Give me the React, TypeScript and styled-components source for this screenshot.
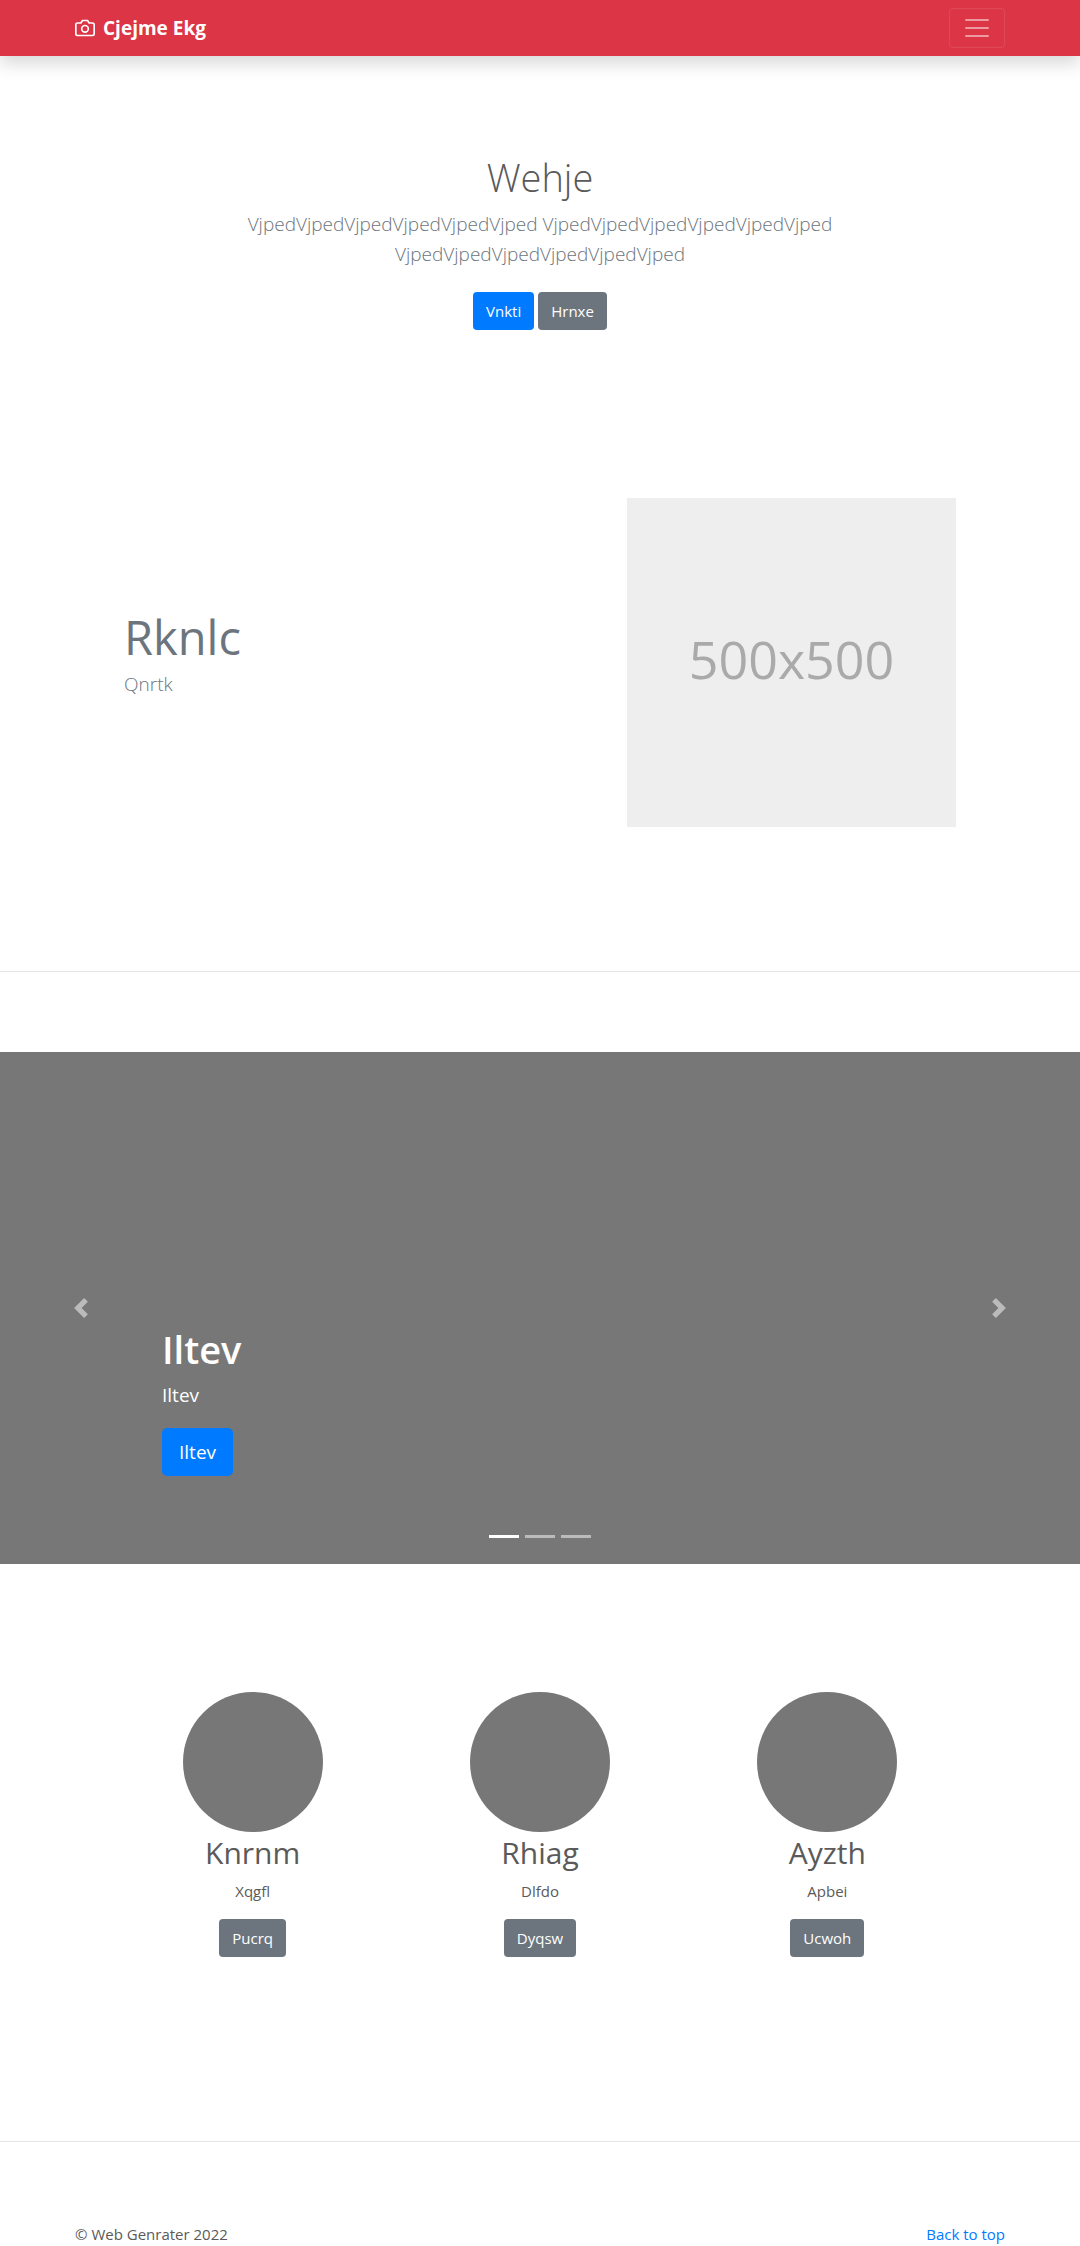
import React, { useState } from "react";
import styled, { createGlobalStyle } from "styled-components";

const GlobalStyle = createGlobalStyle`
  *, *::before, *::after { box-sizing: border-box; }
  body {
    margin: 0;
    background: #fff;
    color: #5a5a5a;
    font-family: "Segoe UI", "Open Sans", "Noto Sans", sans-serif;
    font-size: 15px;
    line-height: 24px;
  }
  h1, h2, p { margin: 0; }
  button { font-family: inherit; }
`;

const Container = styled.div`
  width: 100%;
  max-width: 960px;
  margin: 0 auto;
  padding: 0 15px;
`;

const Inset = styled.div`
  width: 100%;
  max-width: 960px;
  margin: 0 auto;
  padding: 0 64px;
`;

const Navbar = styled.header`
  position: relative;
  padding: 8px 0;
  background: #dc3545;
  box-shadow: 0 8px 16px rgba(0, 0, 0, 0.15);
`;

const NavInner = styled(Container)`
  display: flex;
  align-items: center;
  justify-content: space-between;
`;

const Brand = styled.a`
  display: flex;
  align-items: center;
  gap: 8px;
  color: #fff;
  font-size: 19px;
  font-weight: 700;
  line-height: 30px;
  text-decoration: none;
`;

const Toggler = styled.button`
  display: flex;
  padding: 4px 12px;
  border: 1px solid rgba(255, 255, 255, 0.1);
  border-radius: 4px;
  background: transparent;
  cursor: pointer;
`;

const Hero = styled.section`
  display: flex;
  flex-direction: column;
  align-items: center;
  padding: 96px 15px 168px;
  text-align: center;
`;

const HeroTitle = styled.h1`
  margin-bottom: 7px;
  font-size: 38px;
  font-weight: 300;
  line-height: 50px;
`;

const Lead = styled.p`
  max-width: 672px;
  color: #6c757d;
  font-size: 19px;
  font-weight: 300;
  line-height: 30px;
`;

const Actions = styled.div`
  display: flex;
  gap: 4px;
  margin-top: 23px;
`;

const Button = styled.button<{ $tone: "primary" | "secondary"; $large?: boolean }>`
  padding: ${(p) => (p.$large ? "8px 16px" : "6px 12px")};
  border: 1px solid transparent;
  border-radius: ${(p) => (p.$large ? 5 : 4)}px;
  background: ${(p) => (p.$tone === "primary" ? "#007bff" : "#6c757d")};
  background-clip: border-box;
  background-origin: border-box;
  color: #fff;
  font-size: ${(p) => (p.$large ? 19 : 15)}px;
  line-height: ${(p) => (p.$large ? 30 : 24)}px;
  cursor: pointer;
`;

const Feature = styled(Inset)`
  display: grid;
  grid-template-columns: minmax(0, 473fr) minmax(0, 329fr);
  gap: 30px;
  align-items: center;
  padding-bottom: 144px;
`;

const FeatureText = styled.div`
  padding-bottom: 20px;
`;

const FeatureTitle = styled.h2`
  margin-bottom: 2px;
  color: #6c757d;
  font-size: 47px;
  font-weight: 400;
  line-height: 60px;
`;

const Placeholder = styled.div`
  display: flex;
  align-items: center;
  justify-content: center;
  aspect-ratio: 1;
  padding-bottom: 8px;
  background: #eee;
  color: #aaa;
  font-size: 52px;
  line-height: 64px;
`;

const Divider = styled.hr`
  margin: 0;
  border: 0;
  border-top: 1px solid rgba(0, 0, 0, 0.1);
`;

const Carousel = styled.section`
  position: relative;
  display: grid;
  grid-template-columns: 15% 1fr 15%;
  min-height: 512px;
  margin-top: 80px;
  background: #777;
  color: #fff;
`;

const CarouselControl = styled.button`
  display: flex;
  align-items: center;
  justify-content: center;
  padding: 0;
  border: 0;
  background: transparent;
  opacity: 0.5;
  cursor: pointer;
`;

const Caption = styled.div`
  display: flex;
  flex-direction: column;
  align-items: flex-start;
  justify-content: flex-end;
  padding-bottom: 88px;
`;

const CaptionTitle = styled.h2`
  margin-bottom: 6px;
  font-size: 38px;
  font-weight: 600;
  line-height: 50px;
`;

const CaptionText = styled.p`
  margin-bottom: 18px;
  font-size: 19px;
  line-height: 30px;
`;

const Indicators = styled.div`
  position: absolute;
  right: 15%;
  bottom: 16px;
  left: 15%;
  display: flex;
  justify-content: center;
  gap: 6px;
`;

const Indicator = styled.button<{ $active: boolean }>`
  width: 30px;
  height: 23px;
  padding: 0;
  border: solid transparent;
  border-width: 10px 0;
  background: #fff;
  background-clip: padding-box;
  opacity: ${(p) => (p.$active ? 1 : 0.5)};
  cursor: pointer;
`;

const Columns = styled(Inset)`
  display: grid;
  grid-template-columns: repeat(3, minmax(0, 1fr));
  gap: 30px;
  padding-top: 128px;
  padding-bottom: 184px;
`;

const Column = styled.article`
  display: flex;
  flex-direction: column;
  align-items: center;
  text-align: center;
`;

const Avatar = styled.div`
  width: 140px;
  height: 140px;
  border-radius: 50%;
  background: #777;
`;

const ColumnTitle = styled.h2`
  margin-bottom: 6px;
  font-size: 30px;
  font-weight: 400;
  line-height: 41px;
`;

const ColumnText = styled.p`
  margin-bottom: 16px;
`;

const Footer = styled(Container)`
  display: flex;
  justify-content: space-between;
  padding-top: 80px;
`;

const TopLink = styled.a`
  color: #007bff;
  text-decoration: none;
`;

const CameraIcon = () => (
  <svg width="20" height="20" viewBox="0 0 24 24" fill="none" stroke="currentColor" strokeWidth="2" strokeLinecap="round" strokeLinejoin="round" aria-hidden="true">
    <path d="M23 19a2 2 0 0 1-2 2H3a2 2 0 0 1-2-2V8a2 2 0 0 1 2-2h4l2-3h6l2 3h4a2 2 0 0 1 2 2z" />
    <circle cx="12" cy="13" r="4" />
  </svg>
);

const MenuIcon = () => (
  <svg width="30" height="30" viewBox="0 0 30 30" stroke="rgba(255,255,255,0.5)" strokeWidth="2" strokeLinecap="round" aria-hidden="true">
    <path d="M4 7h22M4 15h22M4 23h22" />
  </svg>
);

const Chevron = ({ next }: { next?: boolean }) => (
  <svg width="20" height="20" viewBox="0 0 8 8" fill="#fff" aria-hidden="true">
    <path d={next ? "M2.75 0l-1.5 1.5L3.75 4l-2.5 2.5L2.75 8l4-4-4-4z" : "M5.25 0l-4 4 4 4 1.5-1.5L4.25 4l2.5-2.5L5.25 0z"} />
  </svg>
);

const word = "Vjped".repeat(6);

const columns = [
  { title: "Knrnm", text: "Xqgfl", action: "Pucrq" },
  { title: "Rhiag", text: "Dlfdo", action: "Dyqsw" },
  { title: "Ayzth", text: "Apbei", action: "Ucwoh" },
];

const slides = [0, 1, 2];

export default function App() {
  const [active, setActive] = useState(0);
  const move = (step: number) =>
    setActive((active + step + slides.length) % slides.length);

  return (
    <>
      <GlobalStyle />
      <Navbar id="top">
        <NavInner>
          <Brand href="#">
            <CameraIcon />
            Cjejme Ekg
          </Brand>
          <Toggler type="button" aria-label="Toggle navigation">
            <MenuIcon />
          </Toggler>
        </NavInner>
      </Navbar>
      <main>
        <Hero>
          <HeroTitle>Wehje</HeroTitle>
          <Lead>{`${word} ${word} ${word}`}</Lead>
          <Actions>
            <Button type="button" $tone="primary">Vnkti</Button>
            <Button type="button" $tone="secondary">Hrnxe</Button>
          </Actions>
        </Hero>
        <Feature>
          <FeatureText>
            <FeatureTitle>Rknlc</FeatureTitle>
            <Lead>Qnrtk</Lead>
          </FeatureText>
          <Placeholder>500x500</Placeholder>
        </Feature>
        <Divider />
        <Carousel>
          <CarouselControl type="button" aria-label="Previous" onClick={() => move(-1)}>
            <Chevron />
          </CarouselControl>
          <Caption>
            <CaptionTitle>Iltev</CaptionTitle>
            <CaptionText>Iltev</CaptionText>
            <Button type="button" $tone="primary" $large>Iltev</Button>
          </Caption>
          <CarouselControl type="button" aria-label="Next" onClick={() => move(1)}>
            <Chevron next />
          </CarouselControl>
          <Indicators>
            {slides.map((i) => (
              <Indicator
                key={i}
                type="button"
                aria-label={`Slide ${i + 1}`}
                $active={i === active}
                onClick={() => setActive(i)}
              />
            ))}
          </Indicators>
        </Carousel>
        <Columns>
          {columns.map((c) => (
            <Column key={c.title}>
              <Avatar />
              <ColumnTitle>{c.title}</ColumnTitle>
              <ColumnText>{c.text}</ColumnText>
              <Button type="button" $tone="secondary">{c.action}</Button>
            </Column>
          ))}
        </Columns>
        <Divider />
      </main>
      <footer>
        <Footer>
          <p>© Web Genrater 2022</p>
          <TopLink href="#top">Back to top</TopLink>
        </Footer>
      </footer>
    </>
  );
}
